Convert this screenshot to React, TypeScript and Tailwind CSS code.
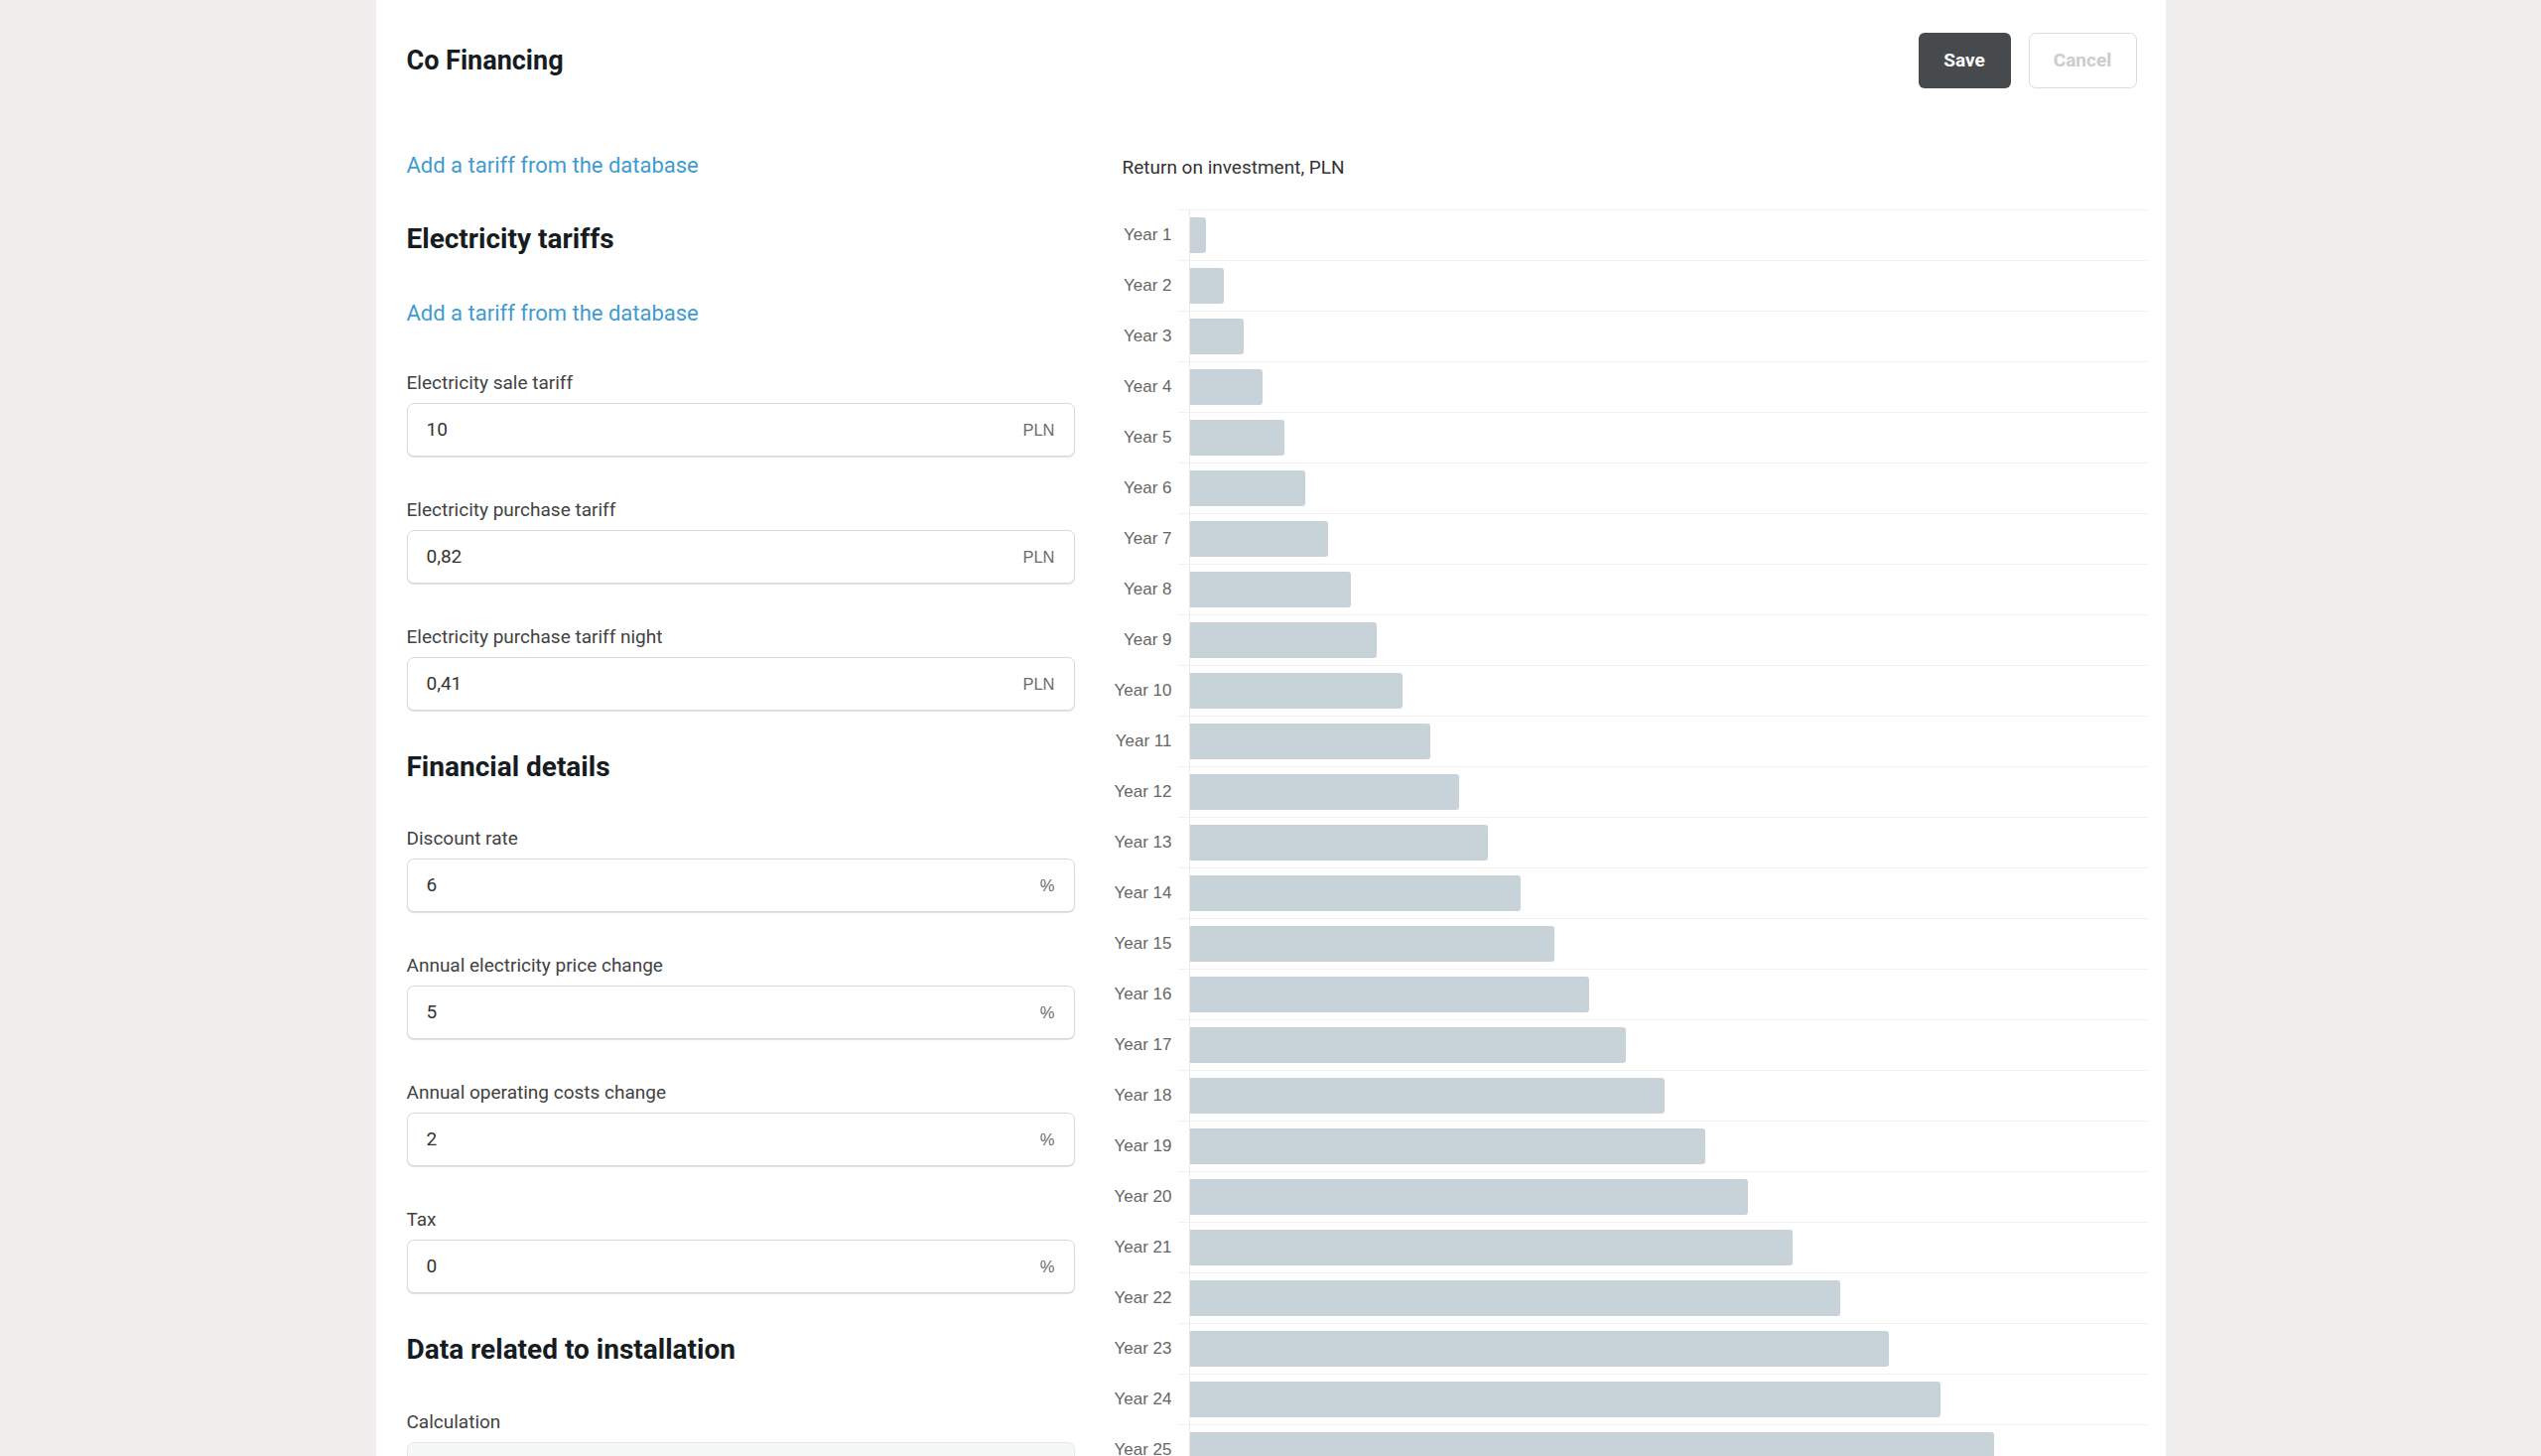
import React from 'react';

const years = [16, 34, 54, 73, 95, 116, 139, 162, 188, 214, 242, 271, 300, 333, 367, 402, 439, 478, 519, 562, 607, 655, 704, 756, 810];

type FieldProps = {
  label: string;
  value: string;
  unit?: string;
  muted?: boolean;
};

const Field: React.FC<FieldProps> = ({ label, value, unit, muted }) => (
  <div className="flex flex-col gap-[7px]">
    <label className="text-[19px] leading-[26px] text-[#424242]">{label}</label>
    <div
      className={
        muted
          ? 'h-[54px] rounded-[7px] border border-[#e3e8e8] bg-[#f6f8f8] flex items-center px-[19px]'
          : 'h-[54px] rounded-[7px] border border-[#d9d9d9] bg-white shadow-[0_1px_1px_rgba(0,0,0,0.12)] flex items-center justify-between px-[19px]'
      }
    >
      <span className="text-[19px] text-[#333]">{value}</span>
      {unit && <span className="font-['Liberation_Sans',Arial,sans-serif] text-[16.5px] text-[#6b6b6b]">{unit}</span>}
    </div>
  </div>
);

const TariffLink: React.FC = () => (
  <a href="#" className="text-[22px] leading-[30px] text-[#3f9bd0] w-fit">
    Add a tariff from the database
  </a>
);

const Heading: React.FC<{ children: React.ReactNode }> = ({ children }) => (
  <h2 className="text-[28px] leading-[36px] font-bold text-[#161c1f]">{children}</h2>
);

export default function App() {
  return (
    <div className="min-h-screen bg-[#efeeec] font-[Roboto,sans-serif]">
      <div className="mx-auto w-[1803px] min-h-screen bg-white pl-[31px] pr-[29px] pt-[33px] pb-10">
        {/* Header */}
        <div className="flex items-center justify-between h-[56px]">
          <h1 className="text-[27px] font-bold text-[#161c1f] leading-none">Co Financing</h1>
          <div className="flex items-center gap-[18px]">
            <button className="w-[93px] h-[56px] rounded-[6px] bg-[#464a4c] text-white text-[19px] font-bold">
              Save
            </button>
            <button className="w-[109px] h-[56px] rounded-[7px] border border-[#dcdcdc] text-[#cccccc] text-[19px] font-bold">
              Cancel
            </button>
          </div>
        </div>

        <div className="flex mt-[63px]">
          {/* Form */}
          <div className="w-[673px] shrink-0 flex flex-col gap-[41px]">
            <TariffLink />
            <Heading>Electricity tariffs</Heading>
            <div className="mt-[1px]">
              <TariffLink />
            </div>
            <div className="mt-[1px]">
              <Field label="Electricity sale tariff" value="10" unit="PLN" />
            </div>
            <Field label="Electricity purchase tariff" value="0,82" unit="PLN" />
            <Field label="Electricity purchase tariff night" value="0,41" unit="PLN" />
            <div className="-mt-[2px]">
              <Heading>Financial details</Heading>
            </div>
            <Field label="Discount rate" value="6" unit="%" />
            <Field label="Annual electricity price change" value="5" unit="%" />
            <Field label="Annual operating costs change" value="2" unit="%" />
            <Field label="Tax" value="0" unit="%" />
            <div className="-mt-[2px]">
              <Heading>Data related to installation</Heading>
            </div>
            <div className="mt-[1px]">
              <Field label="Calculation" value="" muted />
            </div>
          </div>

          {/* Chart */}
          <div className="flex-1 ml-[37px] mr-[-11px] pt-[4px]">
            <div className="pl-[11px] text-[19px] leading-[26px] text-[#333]">Return on investment, PLN</div>
            <div className="mt-[29px] flex flex-col">
              {years.map((w, i) => (
                <div key={i} className="flex h-[51px]">
                  <div className="w-[67px] pr-[6px] flex items-center justify-end font-['Liberation_Sans',Arial,sans-serif] text-[17px] text-[#666] whitespace-nowrap">
                    Year {i + 1}
                  </div>
                  <div className="flex-1 flex border-t border-[#f1f1ee] pl-[11px]">
                    <div className="flex-1 flex items-center border-l border-[#e8e8e8]">
                      <div className="h-[36px] rounded-r-[3px] bg-[#c8d3d9]" style={{ width: w }} />
                    </div>
                  </div>
                </div>
              ))}
            </div>
          </div>
        </div>
      </div>
    </div>
  );
}
